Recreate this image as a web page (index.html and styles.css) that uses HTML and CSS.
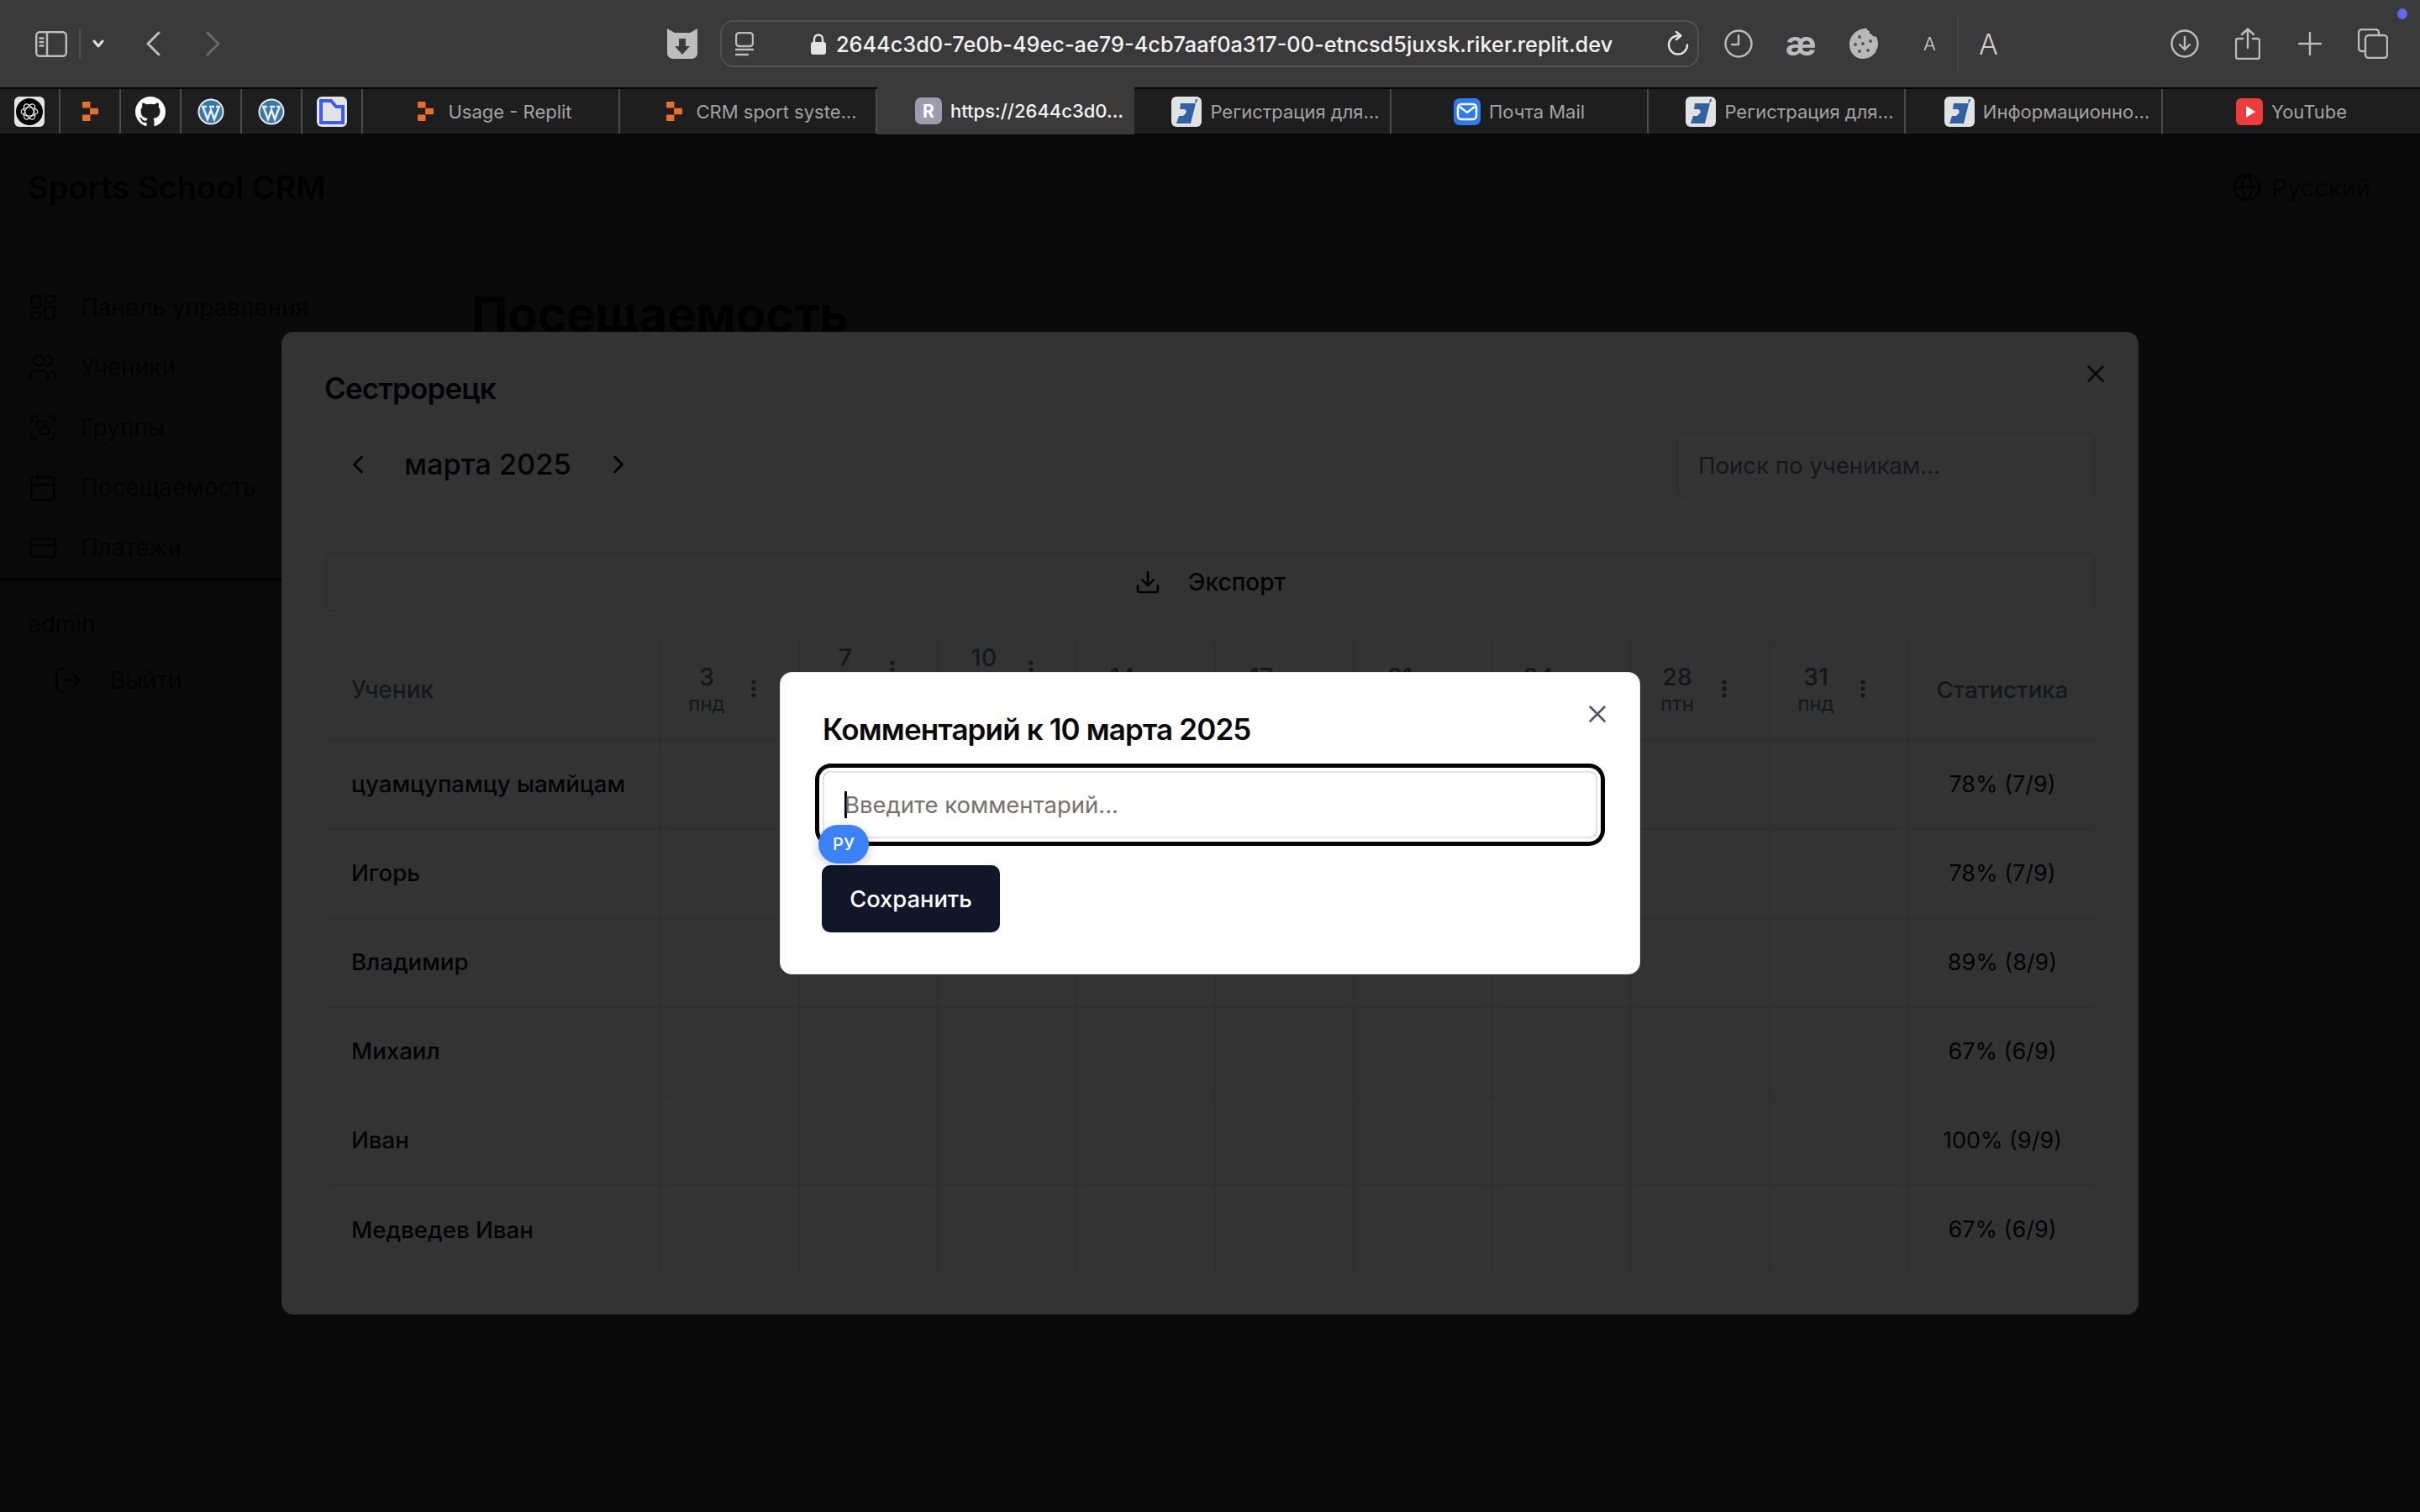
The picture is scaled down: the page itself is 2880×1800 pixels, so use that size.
FILE: index.html
```html
<!DOCTYPE html>
<html lang="ru">
<head>
<meta charset="utf-8">
<title>Sports School CRM</title>
<link rel="stylesheet" href="styles.css">
</head>
<body>
<svg class="sprite" aria-hidden="true">
  <symbol id="replit" viewBox="0 0 19 23"><g fill="#e8702a"><rect x="0" y="0" width="9.500" height="7.500" rx="1"/><rect x="9" y="7.700" width="10" height="7.600" rx="1"/><rect x="0" y="15.500" width="9.500" height="7.500" rx="1"/></g></symbol>
  <symbol id="wp" viewBox="0 0 32 32"><circle cx="16" cy="16" r="15.500" fill="#e9eef2"/><circle cx="16" cy="16" r="13.600" fill="#3a78a8"/><path d="M6.500 10.500 12 25l4-11 4 11 5.500-14.500M5 10h6M14 10h6M22 10h5" fill="none" stroke="#e9eef2" stroke-width="2.500"/></symbol>
  <symbol id="esia" viewBox="0 0 36 36"><rect width="36" height="36" rx="6" fill="#e2e2e2"/><path d="M11 8h18l-6 24H6l3-9h5l3-3a3 3 0 0 0-2-5h-5z" fill="#2f62a3"/><path d="M29 3h2l-1 4h-2z" fill="#2f62a3"/></symbol>
  <symbol id="i-x" viewBox="0 0 24 24"><path d="M18 6 6 18M6 6l12 12"/></symbol>
  <symbol id="i-dots" viewBox="0 0 6 24"><circle cx="3" cy="4" r="2.600"/><circle cx="3" cy="12" r="2.600"/><circle cx="3" cy="20" r="2.600"/></symbol>
</svg>

<header class="toolbar">
  <svg class="tb-sidebar" viewBox="0 0 38 31"><rect x="1.200" y="1.200" width="35.600" height="28.600" rx="4"/><path d="M14 1.500v28M5.500 8.500h4M5.500 13h4M5.500 17.500h4"/></svg>
  <span class="tb-sep"></span>
  <svg class="tb-caret" viewBox="0 0 14 10"><path d="M2 2l5 6 5-6"/></svg>
  <svg class="tb-back" viewBox="0 0 18 30"><path d="M16 2 3 15l13 13"/></svg>
  <svg class="tb-forward" viewBox="0 0 18 30"><path d="M2 2l13 13L2 28"/></svg>
  <svg class="tb-shield" viewBox="0 0 36 36"><path d="M0 0l9 5h18l9-5v29c0 4-3 7-7 7H7c-4 0-7-3-7-7z" fill="#bdbdbd"/><path d="M14 12h8v9h5l-9 10-9-10h5z" fill="#3a3a3a"/></svg>
  <div class="address">
    <svg class="tb-reader" viewBox="0 0 22 29"><rect x="1" y="1" width="20" height="16" rx="4"/><path d="M0 21h22M0 27h15"/></svg>
    <svg class="tb-lock" viewBox="0 0 18 25"><path d="M4 11V6.500a5 5 0 0 1 10 0V11" fill="none" stroke="#e4e4e4" stroke-width="2.400"/><rect y="10" width="18" height="15" rx="3" fill="#e4e4e4"/></svg>
    <span class="url">2644c3d0-7e0b-49ec-ae79-4cb7aaf0a317-00-etncsd5juxsk.riker.replit.dev</span>
    <svg class="tb-reload" viewBox="0 0 26 30"><path d="M13 5.500a11 11 0 1 0 11 11"/><path d="M11 1l5.500 4.500L11 10"/></svg>
  </div>
  <svg class="tb-clock" viewBox="0 0 34 34"><circle cx="17" cy="17" r="15.500"/><path d="M17 7v11H9"/></svg>
  <span class="tb-ae">æ</span>
  <svg class="tb-cookie" viewBox="0 0 36 38"><path d="M22 1c-9-1-21 6-21 19 0 10 7 17 16 17 11 0 18-9 18-18 0-3-1-7-3-9-2 1-4 0-4-2-2 0-4-2-3-4-2 0-3-1-3-3z" fill="#b8b8b8"/><g fill="#555"><circle cx="13" cy="11" r="2"/><circle cx="8" cy="20" r="2"/><circle cx="17" cy="19" r="2"/><circle cx="26" cy="16" r="2"/><circle cx="13" cy="28" r="2"/><circle cx="23" cy="27" r="2"/></g></svg>
  <span class="tb-a-small">A</span>
  <span class="tb-sep tb-sep-a"></span>
  <span class="tb-a-large">A</span>
  <svg class="tb-dl" viewBox="0 0 34 34"><circle cx="17" cy="17" r="15.500"/><path d="M17 9v15M11 18l6 6 6-6"/></svg>
  <svg class="tb-share" viewBox="0 0 30 38"><path d="M9 13H3.500A2.500 2.500 0 0 0 1 15.500v19A2.500 2.500 0 0 0 3.500 37h23a2.500 2.500 0 0 0 2.500-2.500v-19a2.500 2.500 0 0 0-2.500-2.500H21M15 24V2M8 8l7-6.500L22 8"/></svg>
  <svg class="tb-plus" viewBox="0 0 28 28"><path d="M14 1v26M1 14h26"/></svg>
  <svg class="tb-tabs" viewBox="0 0 36 36"><path d="M7 27H5a4 4 0 0 1-4-4V5a4 4 0 0 1 4-4h16a4 4 0 0 1 4 4v3"/><rect x="9" y="8" width="26" height="27" rx="4"/></svg>
  <span class="tb-dot"></span>
</header>

<nav class="tabbar">
  <div class="pin"><svg class="fav36" viewBox="0 0 36 36"><rect width="36" height="36" rx="6" fill="#e4e4e4"/><circle cx="18" cy="18" r="16" fill="#000"/><g fill="none" stroke="#f0f0f0" stroke-width="1.200"><ellipse cx="18" cy="18" rx="10" ry="5"/><ellipse cx="18" cy="18" rx="10" ry="5" transform="rotate(60 18 18)"/><ellipse cx="18" cy="18" rx="10" ry="5" transform="rotate(120 18 18)"/></g></svg></div>
  <div class="pin"><svg class="fav-replit" viewBox="0 0 19 23"><use href="#replit"/></svg></div>
  <div class="pin"><svg class="fav36" viewBox="0 0 16 16"><path fill="#fff" d="M8 0C3.580 0 0 3.580 0 8c0 3.540 2.290 6.530 5.470 7.590.4.070.55-.17.550-.38 0-.19-.01-.82-.01-1.490-2.010.37-2.530-.49-2.690-.94-.09-.23-.48-.94-.82-1.130-.28-.15-.68-.52-.01-.53.630-.01 1.080.58 1.230.82.720 1.210 1.870.87 2.330.66.070-.52.280-.87.510-1.070-1.780-.2-3.640-.89-3.640-3.950 0-.87.310-1.590.82-2.150-.08-.2-.36-1.020.08-2.120 0 0 .67-.21 2.200.82.640-.18 1.320-.27 2-.27s1.360.09 2 .27c1.530-1.040 2.200-.82 2.200-.82.44 1.100.16 1.920.08 2.120.51.560.82 1.270.82 2.150 0 3.070-1.870 3.750-3.650 3.950.290.250.540.730.540 1.480 0 1.070-.01 1.930-.01 2.200 0 .210.150.460.550.380A8.010 8.010 0 0 0 16 8c0-4.420-3.580-8-8-8z"/></svg></div>
  <div class="pin"><svg class="fav32" viewBox="0 0 32 32"><use href="#wp"/></svg></div>
  <div class="pin"><svg class="fav32" viewBox="0 0 32 32"><use href="#wp"/></svg></div>
  <div class="pin"><svg class="fav36" viewBox="0 0 36 36"><rect width="36" height="36" rx="6" fill="#e4e4e4"/><path d="M5 5h12l6 7h8v19H5z" fill="#e4e4e4" stroke="#3a5cf0" stroke-width="4"/></svg></div>
  <div class="tab tab-mid"><svg class="fav-replit fav-replit-gap" viewBox="0 0 19 23"><use href="#replit"/></svg><span>Usage - Replit</span></div>
  <div class="tab tab-long"><svg class="fav-replit fav-replit-gap" viewBox="0 0 19 23"><use href="#replit"/></svg><span>CRM sport syste…</span></div>
  <div class="tab tab-long tab-active"><span class="fav-r">R</span><span>https://2644c3d0…</span></div>
  <div class="tab tab-long"><svg class="fav36" viewBox="0 0 36 36"><use href="#esia"/></svg><span>Регистрация для…</span></div>
  <div class="tab"><svg class="fav32" viewBox="0 0 32 32"><rect width="32" height="32" rx="7" fill="#2f7bf6"/><rect x="5" y="7" width="22" height="18" rx="4" fill="none" stroke="#fff" stroke-width="2.500"/><path d="M7 10l9 7 9-7" fill="none" stroke="#fff" stroke-width="2.500"/></svg><span>Почта Mail</span></div>
  <div class="tab tab-long"><svg class="fav36" viewBox="0 0 36 36"><use href="#esia"/></svg><span>Регистрация для…</span></div>
  <div class="tab tab-long"><svg class="fav36" viewBox="0 0 36 36"><use href="#esia"/></svg><span>Информационно…</span></div>
  <div class="tab"><svg class="fav32" viewBox="0 0 32 32"><rect width="32" height="32" rx="6" fill="#ee3b3b"/><path d="M12 9l11 7-11 7z" fill="#fff"/></svg><span>YouTube</span></div>
</nav>

<div class="viewport">
  <div class="crm">
    <header class="crm-head">
      <span class="brand">Sports School CRM</span>
      <span class="lang">
        <svg class="ico36" viewBox="0 0 24 24"><circle cx="12" cy="12" r="10"/><path d="M12 2a14.500 14.500 0 0 0 0 20 14.500 14.500 0 0 0 0-20M2 12h20"/></svg>
        Русский
      </span>
    </header>
    <div class="crm-body">
      <aside class="side">
        <ul class="nav">
          <li><svg class="ico36" viewBox="0 0 24 24"><rect x="3" y="3" width="7" height="9" rx="1"/><rect x="14" y="3" width="7" height="5" rx="1"/><rect x="14" y="12" width="7" height="9" rx="1"/><rect x="3" y="16" width="7" height="5" rx="1"/></svg>Панель управления</li>
          <li><svg class="ico36" viewBox="0 0 24 24"><path d="M16 21v-2a4 4 0 0 0-4-4H6a4 4 0 0 0-4 4v2M22 21v-2a4 4 0 0 0-3-3.870M16 3.130a4 4 0 0 1 0 7.750"/><circle cx="9" cy="7" r="4"/></svg>Ученики</li>
          <li><svg class="ico36" viewBox="0 0 24 24"><path d="M3 7V5c0-1.100.9-2 2-2h2M17 3h2c1.100 0 2 .9 2 2v2M21 17v2c0 1.100-.9 2-2 2h-2M7 21H5c-1.100 0-2-.9-2-2v-2"/><rect x="7" y="7" width="7" height="5" rx="1"/><rect x="10" y="12" width="7" height="5" rx="1"/></svg>Группы</li>
          <li><svg class="ico36" viewBox="0 0 24 24"><path d="M8 2v4M16 2v4M3 10h18"/><rect x="3" y="4" width="18" height="18" rx="2"/></svg>Посещаемость</li>
          <li><svg class="ico36" viewBox="0 0 24 24"><rect x="2" y="5" width="20" height="14" rx="2"/><path d="M2 10h20"/></svg>Платежи</li>
        </ul>
        <div class="user">
          <div class="user-name">admin</div>
          <div class="logout"><svg class="ico36" viewBox="0 0 24 24"><path d="M9 21H5a2 2 0 0 1-2-2V5a2 2 0 0 1 2-2h4M16 17l5-5-5-5M21 12H9"/></svg>Выйти</div>
        </div>
      </aside>
      <main class="main"><h1>Посещаемость</h1></main>
    </div>
  </div>

  <div class="overlay">
    <section class="sheet">
      <svg class="close close-sheet" viewBox="0 0 24 24"><use href="#i-x"/></svg>
      <h2>Сестрорецк</h2>
      <div class="month-row">
        <div class="month">
          <svg class="chev" viewBox="0 0 24 24"><path d="m15 18-6-6 6-6"/></svg>
          <span class="month-name">марта 2025</span>
          <svg class="chev" viewBox="0 0 24 24"><path d="m9 18 6-6-6-6"/></svg>
        </div>
        <div class="search">Поиск по ученикам...</div>
      </div>
      <div class="export">
        <svg class="ico32" viewBox="0 0 24 24"><path d="M21 15v4a2 2 0 0 1-2 2H5a2 2 0 0 1-2-2v-4M7 10l5 5 5-5M12 15V3"/></svg>
        Экспорт
      </div>
      <table class="grid">
        <colgroup><col class="c-name"><col class="c-day"><col class="c-day"><col class="c-day"><col class="c-day"><col class="c-day"><col class="c-day"><col class="c-day"><col class="c-day"><col class="c-day"><col></colgroup>
        <thead>
          <tr>
            <th class="h-name">Ученик</th>
            <th><div class="dh"><span class="dl"><b>3</b><i>пнд</i></span><svg class="dots" viewBox="0 0 6 24"><use href="#i-dots"/></svg></div></th>
            <th><div class="dh dh-up"><span class="dl"><b>7</b><i>птн</i></span><svg class="dots" viewBox="0 0 6 24"><use href="#i-dots"/></svg></div></th>
            <th><div class="dh dh-up"><span class="dl"><b>10</b><i>пнд</i></span><svg class="dots" viewBox="0 0 6 24"><use href="#i-dots"/></svg></div></th>
            <th><div class="dh"><span class="dl"><b>14</b><i>птн</i></span><svg class="dots" viewBox="0 0 6 24"><use href="#i-dots"/></svg></div></th>
            <th><div class="dh"><span class="dl"><b>17</b><i>пнд</i></span><svg class="dots" viewBox="0 0 6 24"><use href="#i-dots"/></svg></div></th>
            <th><div class="dh"><span class="dl"><b>21</b><i>птн</i></span><svg class="dots" viewBox="0 0 6 24"><use href="#i-dots"/></svg></div></th>
            <th><div class="dh"><span class="dl"><b>24</b><i>пнд</i></span><svg class="dots" viewBox="0 0 6 24"><use href="#i-dots"/></svg></div></th>
            <th><div class="dh"><span class="dl"><b>28</b><i>птн</i></span><svg class="dots" viewBox="0 0 6 24"><use href="#i-dots"/></svg></div></th>
            <th><div class="dh"><span class="dl"><b>31</b><i>пнд</i></span><svg class="dots" viewBox="0 0 6 24"><use href="#i-dots"/></svg></div></th>
            <th class="h-stat">Статистика</th>
          </tr>
        </thead>
        <tbody>
          <tr><td class="name">цуамцупамцу ыамйцам</td><td></td><td></td><td></td><td></td><td></td><td></td><td></td><td></td><td></td><td class="stat">78% (7/9)</td></tr>
          <tr><td class="name">Игорь</td><td></td><td></td><td></td><td></td><td></td><td></td><td></td><td></td><td></td><td class="stat">78% (7/9)</td></tr>
          <tr><td class="name">Владимир</td><td></td><td></td><td></td><td></td><td></td><td></td><td></td><td></td><td></td><td class="stat">89% (8/9)</td></tr>
          <tr><td class="name">Михаил</td><td></td><td></td><td></td><td></td><td></td><td></td><td></td><td></td><td></td><td class="stat">67% (6/9)</td></tr>
          <tr><td class="name">Иван</td><td></td><td></td><td></td><td></td><td></td><td></td><td></td><td></td><td></td><td class="stat">100% (9/9)</td></tr>
          <tr class="last"><td class="name">Медведев Иван</td><td></td><td></td><td></td><td></td><td></td><td></td><td></td><td></td><td></td><td class="stat">67% (6/9)</td></tr>
        </tbody>
      </table>
    </section>
  </div>

  <div class="overlay">
    <section class="dialog">
      <svg class="close close-dialog" viewBox="0 0 24 24"><use href="#i-x"/></svg>
      <h3>Комментарий к 10 марта 2025</h3>
      <div class="field"><span class="caret"></span><span class="placeholder">Введите комментарий...</span><span class="kbd-badge">РУ</span></div>
      <button class="save">Сохранить</button>
    </section>
  </div>
</div>
</body>
</html>
```

FILE: styles.css
```css
* { box-sizing: border-box; }
html, body { margin: 0; height: 100%; }
body {
  width: 2880px; height: 1800px; overflow: hidden;
  display: flex; flex-direction: column;
  font-family: Inter, "Noto Sans", sans-serif;
  background: #fff; color: #0b1120;
}
.sprite { display: none; }
svg { flex: none; display: block; }

/* browser toolbar */
.toolbar {
  position: relative; height: 104px; flex: none;
  background: #3a3a3a;
  display: flex; align-items: center;
}
.toolbar > svg, .address > svg { fill: none; stroke: #bcbcbc; stroke-width: 2.4; stroke-linecap: round; stroke-linejoin: round; }
.toolbar > .tb-shield, .toolbar > .tb-cookie, .address > .tb-lock { stroke: none; }
.tb-sidebar { width: 38px; height: 31px; margin-left: 42px; }
.tb-sep { width: 2px; height: 36px; background: #505050; margin-left: 14px; }
.tb-caret { width: 14px; height: 10px; margin-left: 14px; stroke: #e0e0e0 !important; stroke-width: 3 !important; }
.tb-back { width: 18px; height: 30px; margin-left: 49px; stroke-width: 3 !important; }
.tb-forward { width: 18px; height: 30px; margin-left: 54px; stroke: #6a6a6a !important; stroke-width: 3 !important; }
.tb-shield { width: 36px; height: 36px; margin-left: 531px; }
.address {
  width: 1165px; height: 56px; margin-left: 27px;
  border: 2px solid #515151; border-radius: 16px;
  display: flex; align-items: center;
}
.tb-reader { width: 22px; height: 29px; margin-left: 16px; }
.tb-lock { width: 18px; height: 25px; margin-left: 68px; }
.url { margin-left: 12px; font-size: 25.300px; font-weight: 500; color: #f2f2f2; white-space: nowrap; }
.tb-reload { width: 26px; height: 30px; margin-left: auto; margin-right: 10px; stroke: #e4e4e4 !important; }
.tb-clock { width: 34px; height: 34px; margin-left: 30px; }
.tb-ae { margin-left: 39px; width: 36px; font-size: 40px; line-height: 46px; font-weight: 700; color: #bcbcbc; }
.tb-cookie { width: 36px; height: 38px; margin-left: 39px; }
.tb-a-small { margin-left: 53px; width: 15px; font-size: 22px; font-weight: 300; color: #cfcfcf; }
.tb-sep-a { margin-left: 25px; height: 68px; background: #474747; }
.tb-a-large { margin-left: 24px; width: 23px; font-size: 34px; font-weight: 300; color: #cfcfcf; }
.tb-dl { width: 34px; height: 34px; margin-left: 205px; }
.tb-share { width: 30px; height: 38px; margin-left: 43px; }
.tb-plus { width: 28px; height: 28px; margin-left: 45px; }
.tb-tabs { width: 36px; height: 36px; margin-left: 43px; }
.tb-dot { position: absolute; left: 2853px; top: 10px; width: 12px; height: 13px; border-radius: 50%; background: #6366f1; }

/* tab strip */
.tabbar {
  height: 56px; flex: none; display: flex;
  background: #1e1e1e;
  border-top: 2px solid #060606; border-bottom: 1px solid #060606;
}
.pin {
  width: 72px; flex: none; display: flex; align-items: center; justify-content: center;
  border-right: 2px solid #4a4a4a;
}
.tab {
  flex: 0 0 306px; min-width: 0; display: flex; align-items: center; justify-content: center; gap: 10px;
  border-right: 2px solid #4a4a4a;
  font-size: 22px; color: #a3a3a3; white-space: nowrap;
}
.tab:last-child { border-right: 0; }
.tab-mid { padding-left: 10px; }
.tab-long { padding-left: 32px; }
.tab-active { background: #3a3a3a; color: #f4f4f4; font-weight: 500; margin-top: -2px; margin-bottom: -1px; border-right: 0; }
.fav36 { width: 36px; height: 36px; }
.fav32 { width: 32px; height: 32px; }
.fav-replit { width: 19px; height: 23px; }
.fav-replit-gap { margin-right: 7px; }
.fav-r {
  width: 32px; height: 32px; border-radius: 7px; background: #9c9cae;
  display: flex; align-items: center; justify-content: center;
  color: #fff; font-size: 21px; font-weight: 700;
}

/* page area */
.viewport { position: relative; flex: 1; min-height: 0; overflow: hidden; }
.crm { height: 100%; display: flex; flex-direction: column; background: #fff; }
.crm-head {
  height: 128px; flex: none; display: flex; align-items: center; justify-content: space-between;
  padding: 0 59px 0 33px; border-bottom: 2px solid #e5e7eb;
}
.brand { font-size: 38px; font-weight: 600; }
.lang { display: flex; align-items: center; gap: 12px; font-size: 29px; color: #333; }
.crm-body { flex: 1; display: flex; }
.side { width: 512px; flex: none; border-right: 2px solid #e5e7eb; }
.nav { list-style: none; margin: 0; padding: 42px 0 0 33px; border-bottom: 4px solid #0b1120; height: 404px; }
.nav li { height: 71.500px; display: flex; align-items: center; gap: 27px; font-size: 28px; color: #333; }
.ico36 { width: 36px; height: 36px; fill: none; stroke: currentColor; stroke-width: 2; stroke-linecap: round; stroke-linejoin: round; }
.ico32 { width: 32px; height: 32px; fill: none; stroke: currentColor; stroke-width: 2; stroke-linecap: round; stroke-linejoin: round; }
.user { padding: 33px 0 0 33px; }
.user-name { font-size: 28px; line-height: 36px; color: #333; }
.logout { display: flex; align-items: center; gap: 32px; margin-top: 22px; height: 54px; padding-left: 30px; font-size: 28px; color: #333; }
.main { padding: 52px 0 0 49px; }
h1 { margin: 0; font-size: 58px; line-height: 68px; font-weight: 700; }

/* overlays */
.overlay {
  position: absolute; inset: 0;
  background: rgba(0, 0, 0, .8);
  display: flex; align-items: center; justify-content: center;
}
.sheet {
  position: relative; width: 2210px; height: 1170px;
  background: #fff; border-radius: 14px; border: 1px solid #e5e7eb;
  padding: 44px 50px 0;
}
.close { position: absolute; fill: none; stroke: currentColor; stroke-width: 1.800; stroke-linecap: round; }
.close-sheet { width: 34px; height: 34px; right: 33px; top: 32px; color: #1f2937; }
h2 { margin: 0; font-size: 35px; line-height: 44px; font-weight: 600; letter-spacing: -.025em; }
.month-row { margin-top: 30px; height: 79px; display: flex; align-items: center; justify-content: space-between; }
.month { display: flex; align-items: center; margin: 0 0 2px 22px; }
.chev { width: 36px; height: 36px; fill: none; stroke: #0b1120; stroke-width: 2; stroke-linecap: round; stroke-linejoin: round; }
.month-name { margin: 0 38px 0 37px; font-size: 34.400px; font-weight: 500; }
.search {
  width: 499px; height: 79px; border: 2px solid #e2e8f0; border-radius: 10px;
  display: flex; align-items: center; padding-left: 24px;
  font-size: 27.600px; color: #64748b;
}
.export {
  margin-top: 65px; height: 71px; padding-bottom: 2px; border: 2px solid #e2e8f0; border-radius: 10px;
  display: flex; align-items: center; justify-content: center; gap: 32px;
  font-size: 28px; font-weight: 500;
}
.grid { margin-top: 34px; width: 100%; table-layout: fixed; border-collapse: collapse; }
.c-name { width: 400px; }
.c-day { width: 165px; }
.grid th, .grid td { padding: 0; border-bottom: 2px solid #e2e8f0; }
.grid th + th, .grid td + td { border-left: 2px solid #e2e8f0; }
.grid tr.last td { border-bottom: 0; }
.grid thead tr { height: 118px; }
.grid tbody tr { height: 106px; }
.h-name { text-align: left; padding: 0 0 2px 32px !important; font-size: 28px; font-weight: 500; color: #64748b; }
.h-stat { text-align: center; padding-bottom: 2px !important; font-size: 27.700px; font-weight: 500; color: #64748b; }
.dh { display: flex; align-items: center; padding: 0 0 3px 14px; gap: 13px; }
.dh-up { transform: translateY(-23px); }
.dl { width: 80px; display: flex; flex-direction: column; align-items: center; color: #64748b; }
.dl b { font-size: 29px; line-height: 36px; font-weight: 500; }
.dl i { font-size: 24px; line-height: 28px; font-style: normal; font-weight: 400; }
.dots { width: 6px; height: 24px; fill: #64748b; }
.name { padding: 0 0 2px 32px !important; font-size: 27.600px; font-weight: 500; }
.stat { text-align: center; padding-bottom: 2px !important; font-size: 27px; }

/* comment dialog */
.dialog {
  position: relative; width: 1024px; height: 360px;
  background: #fff; border: 1px solid #e5e7eb; border-radius: 14px;
  padding: 46px 50px 0;
}
.close-dialog { width: 34px; height: 34px; right: 33px; top: 32px; color: #4b5563; }
h3 { margin: 0; font-size: 35px; line-height: 42px; font-weight: 600; letter-spacing: -.025em; color: #0a0a0a; }
.field {
  position: relative; margin-top: 29px; height: 80px;
  border: 2px solid #e5e5e5; border-radius: 10px;
  box-shadow: 0 0 0 4px #fff, 0 0 0 9px #000;
  display: flex; align-items: center; padding-left: 24px;
  font-size: 27.500px; color: #78716c;
}
.caret { width: 3px; height: 32px; margin-right: -3px; background: #000; flex: none; }
.kbd-badge {
  position: absolute; left: -7px; top: 62px; width: 60px; height: 46px; border-radius: 23px;
  background: #3b82f6; color: #fff; font-size: 20px; font-weight: 500;
  display: flex; align-items: center; justify-content: center;
  box-shadow: 0 4px 14px rgba(0, 0, 0, .2);
}
.save {
  display: block; margin: 32px 0 0 -1px; width: 212px; height: 80px;
  background: #111729; color: #fff; border: 0; border-radius: 10px;
  font: 500 27.300px Inter, sans-serif;
}
```
